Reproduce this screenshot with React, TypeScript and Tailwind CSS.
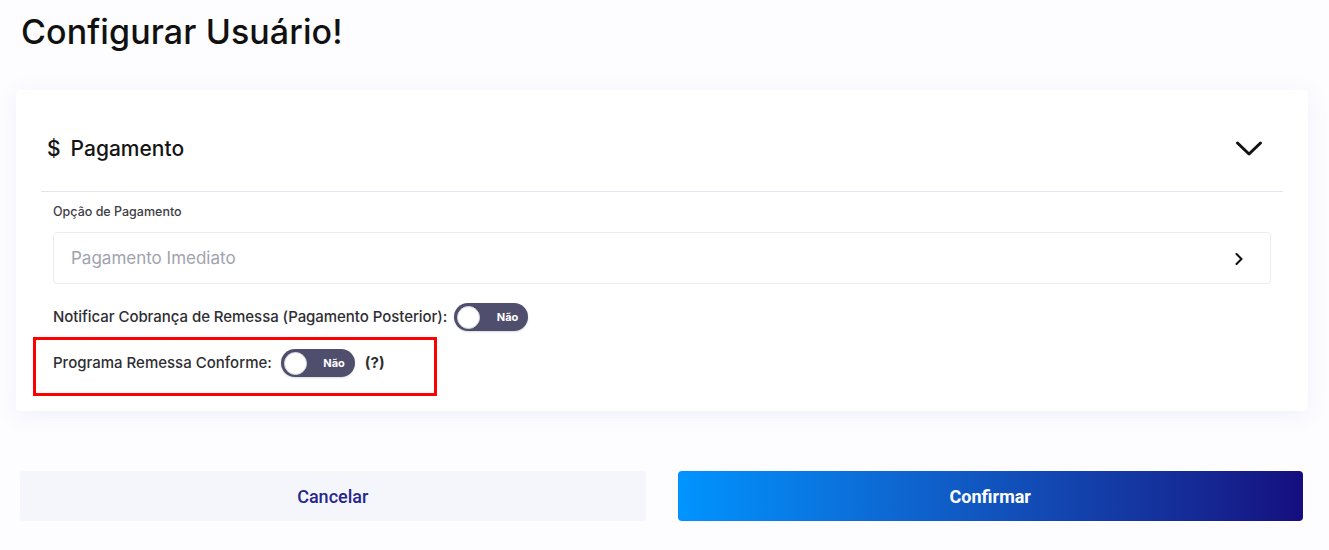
import { ChevronRight } from "lucide-react";

function Toggle() {
  return (
    <div className="relative flex h-[28px] w-[74px] items-center rounded-full bg-[#4f4e6d] shadow-[0_1px_2px_rgba(0,0,0,0.15)]">
      <div className="ml-[3px] h-[23px] w-[23px] rounded-full border border-[#d6d6de] bg-white" />
      <span className="ml-auto mr-[10px] text-[11px] font-bold text-white">Não</span>
    </div>
  );
}

export default function App() {
  return (
    <div className="min-h-screen bg-[#fdfdff] font-['Inter',sans-serif] text-[#141414]">
      <h1 className="pl-[21px] pt-[8px] text-[34px] font-medium leading-[48px] tracking-[0.1px] text-[#111]">
        Configurar Usuário!
      </h1>

      <div className="ml-[16px] mr-[21px] mt-[34px] rounded-[4px] bg-white shadow-[0_4px_22px_rgba(100,100,220,0.09)]">
        <div className="mx-[25px] flex h-[102px] items-center border-b border-[#e3e3ee] pl-[6px] pr-[20px] pt-[16px]">
          <span className="text-[21px] font-medium">$</span>
          <span className="ml-[10px] text-[21px] font-medium">Pagamento</span>
          <svg className="ml-auto" width="28" height="18" viewBox="0 0 28 18" fill="none">
            <polyline points="2.5,3 14,14 25.5,3" stroke="#111" strokeWidth="3" strokeLinecap="round" strokeLinejoin="round" />
          </svg>
        </div>

        <div className="px-[37px] pb-[34px] pt-[12px]">
          <div className="text-[12.5px] font-medium leading-[16px] text-[#3d3d45]">Opção de Pagamento</div>
          <div className="mt-[12px] flex h-[52px] items-center rounded-[4px] border border-[#ececf0] pl-[17px] pr-[21px] pt-[2px]">
            <span className="text-[17px] text-[#a0a3ad]">Pagamento Imediato</span>
            <ChevronRight className="ml-auto text-[#111]" size={20} strokeWidth={2.5} />
          </div>

          <div className="mt-[19px] flex items-center gap-[7px]">
            <span className="text-[15px] font-medium tracking-[-0.05px] text-[#2e2e33]">
              Notificar Cobrança de Remessa (Pagamento Posterior):
            </span>
            <Toggle />
          </div>

          <div className="relative mt-[18px] flex items-center">
            <div className="pointer-events-none absolute -left-[20px] -top-[12px] h-[59px] w-[404px] border-[3px] border-[#ff0000]" />
            <span className="text-[15px] font-medium text-[#2e2e33]">Programa Remessa Conforme:</span>
            <div className="ml-[9px]">
              <Toggle />
            </div>
            <span className="ml-[10px] text-[15px] font-bold text-[#2e2e33]">(?)</span>
          </div>
        </div>
      </div>

      <div className="mt-[60px] grid grid-cols-2 gap-[32px] pl-[20px] pr-[26px] font-['Roboto',sans-serif]">
        <button className="h-[50px] rounded-[4px] bg-[#f5f6fc] text-[18px] font-medium text-[#27278c]">
          Cancelar
        </button>
        <button className="h-[50px] rounded-[4px] bg-linear-to-r from-[#0094ff] to-[#150d80] text-[18px] font-bold text-white">
          Confirmar
        </button>
      </div>
    </div>
  );
}
